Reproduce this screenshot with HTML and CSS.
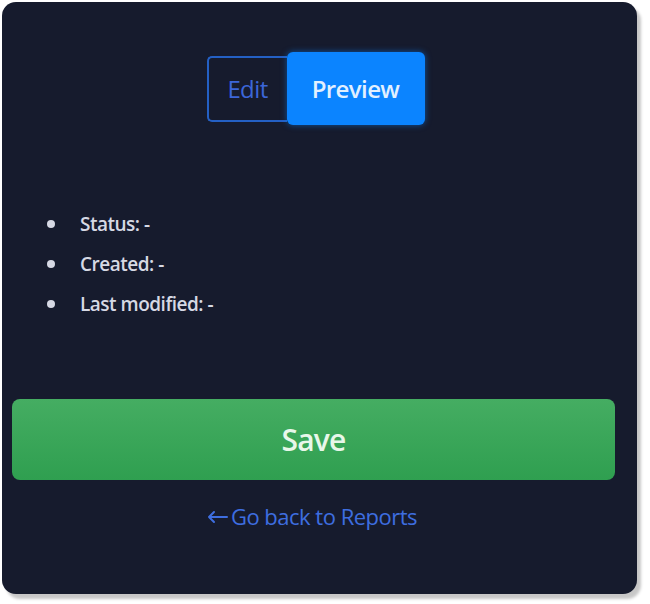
FILE: index.html
```html
<!DOCTYPE html>
<html lang="en">
<head>
    <meta charset="UTF-8">
    <meta name="viewport" content="width=device-width, initial-scale=1.0">
    <title>Report</title>
    <link rel="stylesheet" href="styles.css">
</head>
<body>
    <div class="panel">
        <div class="toggle">
            <button class="tab tab-edit">Edit</button>
            <button class="tab tab-preview">Preview</button>
        </div>

        <ul class="meta">
            <li>Status: -</li>
            <li>Created: -</li>
            <li>Last modified: -</li>
        </ul>

        <button class="save">Save</button>

        <a class="back" href="#">
            <svg class="arrow" width="22" height="14" viewBox="0 0 22 14">
                <path d="M21 7H3M8 2L3 7l5 5" fill="none" stroke="currentColor" stroke-width="2" stroke-linecap="round" stroke-linejoin="round"/>
            </svg>
            Go back to Reports
        </a>
    </div>
</body>
</html>
```

FILE: styles.css
```css
* {
    margin: 0;
    padding: 0;
    box-sizing: border-box;
}
body {
    font-family: 'Open Sans', 'Noto Sans', sans-serif;
    background: #fff;
    width: 650px;
    height: 604px;
    overflow: hidden;
}
.panel {
    margin: 2px;
    width: 635px;
    height: 592px;
    background: #161b2d;
    border-radius: 14px;
    box-shadow: 4px 5px 3px rgba(0, 0, 0, 0.22);
    padding: 50px 22px 0 10px;
    display: flex;
    flex-direction: column;
}
.toggle {
    display: flex;
    align-items: center;
    justify-content: center;
    padding-left: 4px;
}
.tab {
    font-family: inherit;
    font-size: 24px;
    cursor: pointer;
    letter-spacing: -0.6px;
}
.tab-edit {
    width: 80px;
    height: 66px;
    background: transparent;
    border: 2px solid #2460c4;
    border-right: none;
    border-radius: 5px 0 0 5px;
    color: #3c66d8;
    font-weight: 500;
}
.tab-preview {
    width: 138px;
    height: 73px;
    background: #0b84ff;
    border: none;
    border-radius: 6px;
    color: #e2f0ff;
    font-weight: 600;
    box-shadow: 0 0 6px rgba(11, 132, 255, 0.55);
}
.meta {
    list-style: none;
    margin-top: 79px;
    padding-left: 35px;
}
.meta li {
    display: flex;
    align-items: center;
    height: 40px;
    font-size: 19px;
    font-weight: 600;
    color: #d6d9e4;
    letter-spacing: -0.5px;
}
.meta li::before {
    content: "";
    width: 8px;
    height: 8px;
    border-radius: 50%;
    background: #d6d9e4;
    margin-right: 25px;
}
.save {
    margin-top: 75px;
    height: 81px;
    width: 100%;
    border: none;
    border-radius: 8px;
    background: linear-gradient(#45ad62, #2f9f50);
    color: #e8f7ea;
    font-family: inherit;
    font-size: 30px;
    font-weight: 600;
    letter-spacing: -0.8px;
    cursor: pointer;
}
.back {
    margin-top: 20px;
    align-self: center;
    line-height: 32px;
    font-size: 22px;
    color: #3e6ee0;
    text-decoration: none;
    letter-spacing: -0.5px;
    display: flex;
    align-items: center;
    gap: 3px;
    padding-right: 4px;
}
.arrow {
    margin-top: 1px;
}
```
